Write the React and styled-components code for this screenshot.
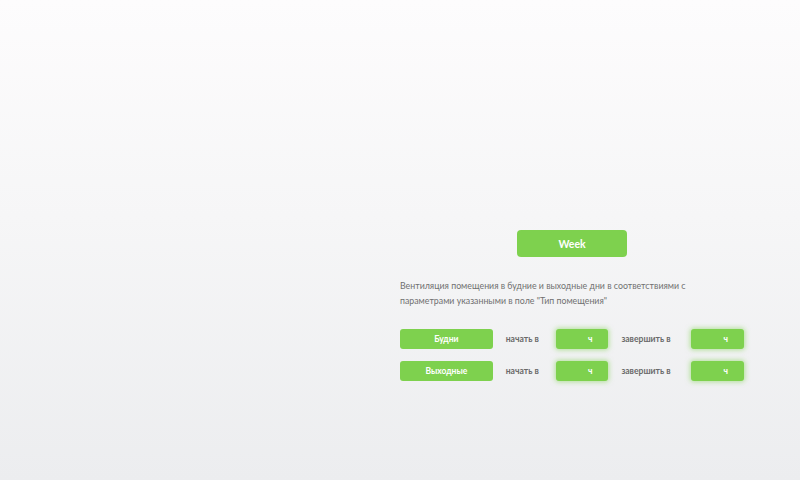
import React from "react";
import styled, { createGlobalStyle } from "styled-components";

const GlobalStyle = createGlobalStyle`
  html, body {
    margin: 0;
    padding: 0;
  }
  body {
    font-family: Lato, "Open Sans", sans-serif;
  }
`;

const schedules = [
  { name: "Будни" },
  { name: "Выходные" }
];

function ScheduleRow({ name }) {
  return (
    <Row>
      <DayButton>{name}</DayButton>
      <Label $width={63}>начать в</Label>
      <HourBox>ч</HourBox>
      <Label $width={83}>завершить в</Label>
      <HourBox>ч</HourBox>
    </Row>
  );
}

export default function App() {
  return (
    <Page>
      <GlobalStyle />
      <Panel>
        <WeekButton>Week</WeekButton>
        <Description>
          Вентиляция помещения в будние и выходные дни в соответствиями с
          параметрами указанными в поле "Тип помещения"
        </Description>
        <Rows>
          {schedules.map(item => (
            <ScheduleRow key={item.name} name={item.name} />
          ))}
        </Rows>
      </Panel>
    </Page>
  );
}

const green = "#7ed14e";

const Page = styled.div`
  width: 800px;
  height: 480px;
  overflow: hidden;
  background: linear-gradient(180deg, #fdfcfd 0%, #f6f6f7 45%, #ecedef 100%);
  display: flex;
`;

const Panel = styled.div`
  margin-left: 400px;
  padding-top: 230px;
  width: 344px;
  display: flex;
  flex-direction: column;
`;

const WeekButton = styled.div`
  align-self: center;
  width: 110px;
  height: 27px;
  border-radius: 4px;
  background: ${green};
  color: #fff;
  font-size: 10.5px;
  font-weight: 700;
  display: flex;
  align-items: center;
  justify-content: center;
`;

const Description = styled.p`
  margin: 21px 0 0;
  width: 310px;
  font-size: 8.8px;
  line-height: 15px;
  color: #707070;
`;

const Rows = styled.div`
  margin-top: 21px;
  display: flex;
  flex-direction: column;
  gap: 12px;
`;

const Row = styled.div`
  display: flex;
  align-items: center;
  height: 20px;
`;

const DayButton = styled.div`
  width: 93px;
  height: 20px;
  border-radius: 3px;
  background: ${green};
  color: #fff;
  font-size: 8.5px;
  font-weight: 700;
  display: flex;
  align-items: center;
  justify-content: center;
`;

const Label = styled.span`
  box-sizing: border-box;
  padding-left: 13px;
  width: ${({ $width }) => $width}px;
  font-size: 8.6px;
  font-weight: 700;
  color: #6a6a6a;
`;

const HourBox = styled.div`
  width: 53px;
  height: 20px;
  border-radius: 3px;
  background: ${green};
  box-shadow: 0 0 5px 1px rgba(126, 209, 78, 0.55);
  color: #fff;
  font-size: 8.5px;
  font-weight: 700;
  display: flex;
  align-items: center;
  justify-content: flex-end;
  padding-right: 16px;
  box-sizing: border-box;
`;
